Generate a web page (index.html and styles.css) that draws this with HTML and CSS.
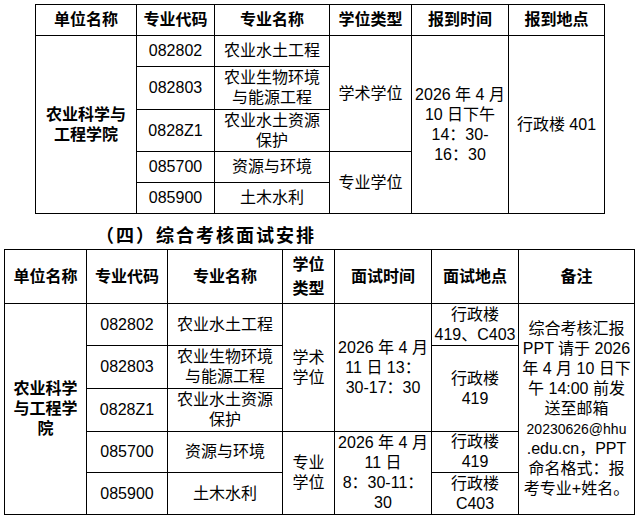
FILE: index.html
```html
<!DOCTYPE html>
<html lang="zh-CN">
<head>
<meta charset="utf-8">
<link rel="stylesheet" href="styles.css">
</head>
<body>
<table class="grid grid-top">
  <colgroup>
    <col class="c101"><col class="c78"><col class="c115"><col class="c82"><col class="c97"><col class="c96">
  </colgroup>
  <tr class="h31 head">
    <th>单位名称</th><th>专业代码</th><th>专业名称</th><th>学位类型</th><th>报到时间</th><th>报到地点</th>
  </tr>
  <tr class="h31">
    <td rowspan="5" class="bold">农业科学与<br>工程学院</td>
    <td>082802</td><td>农业水土工程</td>
    <td rowspan="3">学术学位</td>
    <td rowspan="5">2026 年 4 月<br>10 日下午<br>14：30-<br>16：30</td>
    <td rowspan="5">行政楼 401</td>
  </tr>
  <tr class="h43"><td>082803</td><td>农业生物环境<br>与能源工程</td></tr>
  <tr class="h42"><td>0828Z1</td><td>农业水土资源<br>保护</td></tr>
  <tr class="h31"><td>085700</td><td>资源与环境</td><td rowspan="2">专业学位</td></tr>
  <tr class="h31"><td>085900</td><td>土木水利</td></tr>
</table>

<h2 class="title">（四）综合考核面试安排</h2>

<table class="grid grid-bottom">
  <colgroup>
    <col class="c82"><col class="c81"><col class="c115"><col class="c52"><col class="c97"><col class="c87"><col class="c116">
  </colgroup>
  <tr class="h54 head">
    <th>单位名称</th><th>专业代码</th><th>专业名称</th><th class="tall">学位<br>类型</th><th>面试时间</th><th>面试地点</th><th>备注</th>
  </tr>
  <tr class="h42">
    <td rowspan="5" class="bold">农业科学<br>与工程学<br>院</td>
    <td>082802</td><td>农业水土工程</td>
    <td rowspan="3">学术<br>学位</td>
    <td rowspan="3">2026 年 4 月<br>11 日 13：<br>30-17：30</td>
    <td>行政楼<br>419、C403</td>
    <td rowspan="5" class="notes">综合考核汇报<br>PPT 请于 2026<br>年 4 月 10 日下<br>午 14:00 前发<br>送至邮箱<br><span class="small">20230626@hhu</span><br>.edu.cn，PPT<br>命名格式：报<br>考专业+姓名。</td>
  </tr>
  <tr class="h43"><td>082803</td><td>农业生物环境<br>与能源工程</td><td rowspan="2">行政楼<br>419</td></tr>
  <tr class="h43"><td>0828Z1</td><td>农业水土资源<br>保护</td></tr>
  <tr class="h41">
    <td>085700</td><td>资源与环境</td>
    <td rowspan="2">专业<br>学位</td>
    <td rowspan="2">2026 年 4 月<br>11 日<br>8：30-11：<br>30</td>
    <td>行政楼<br>419</td>
  </tr>
  <tr class="h42"><td>085900</td><td>土木水利</td><td>行政楼<br>C403</td></tr>
</table>
</body>
</html>
```

FILE: styles.css
```css
html, body {
  margin: 0;
  padding: 0;
  background: #ffffff;
}
body {
  font-family: "Liberation Sans", "Noto Sans CJK SC", sans-serif;
  color: #000;
  font-size: 16px;
  line-height: 20px;
}
.grid {
  border-collapse: collapse;
  table-layout: fixed;
}
.grid td, .grid th {
  border: 1px solid #000;
  padding: 0;
  text-align: center;
  vertical-align: middle;
  white-space: nowrap;
  overflow: hidden;
}
.grid th, .bold {
  font-weight: 700;
  font-family: "Liberation Sans", "Noto Sans CJK SC", sans-serif;
}
.grid-top {
  width: 569px;
  margin: 4px 0 0 35px;
}
.grid-bottom {
  width: 630px;
  margin: 0 0 0 4px;
}
.title {
  margin: 0;
  height: 35px;
  padding-left: 96px;
  font-family: "Noto Sans CJK SC", sans-serif;
  font-weight: 700;
  font-size: 18px;
  letter-spacing: 2px;
  line-height: 36px;
  box-sizing: border-box;
  padding-top: 2px;
}
.tall { line-height: 24px; }
.small { font-size: 14px; }
.c52 { width: 52px; }
.c78 { width: 78px; }
.c81 { width: 81px; }
.c82 { width: 82px; }
.c87 { width: 87px; }
.c96 { width: 96px; }
.c97 { width: 97px; }
.c101 { width: 101px; }
.c115 { width: 115px; }
.c116 { width: 116px; }
.h31 { height: 31px; }
.h41 { height: 41px; }
.h42 { height: 42px; }
.h43 { height: 43px; }
.h54 { height: 54px; }
```
